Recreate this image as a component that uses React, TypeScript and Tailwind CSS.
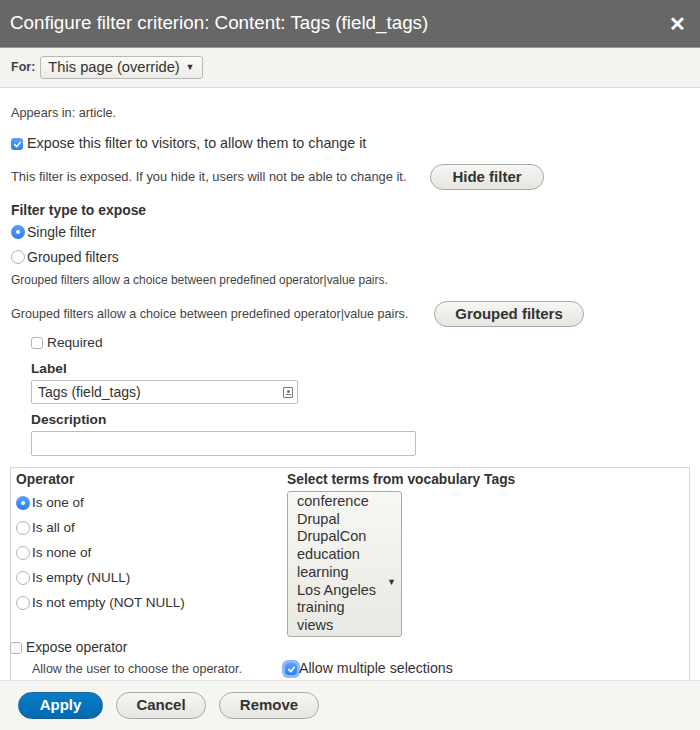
import React from "react";

function Check({ checked, glow }: { checked?: boolean; glow?: boolean }) {
  if (checked) {
    return (
      <span
        className={`inline-flex h-[12px] w-[12px] shrink-0 items-center justify-center rounded-[3px] bg-gradient-to-b from-[#5aa2fa] to-[#2a7ef0] ${glow ? "ring-[3px] ring-[#8fb8f4]" : ""}`}
      >
        <svg width="9" height="9" viewBox="0 0 10 10">
          <path d="M2 5.2 L4.2 7.4 L8 2.6" fill="none" stroke="white" strokeWidth="1.8" strokeLinecap="round" strokeLinejoin="round" />
        </svg>
      </span>
    );
  }
  return <span className="inline-block h-[12px] w-[12px] shrink-0 rounded-[3px] border border-[#b3b3b3] bg-white" />;
}

function Radio({ checked }: { checked?: boolean }) {
  if (checked) {
    return (
      <span className="inline-flex h-[14px] w-[14px] shrink-0 items-center justify-center rounded-full bg-gradient-to-b from-[#5aa2fa] to-[#2a7ef0]">
        <span className="h-[4px] w-[4px] rounded-full bg-white" />
      </span>
    );
  }
  return <span className="inline-block h-[14px] w-[14px] shrink-0 rounded-full border border-[#b3b3b3] bg-white" />;
}

function PillButton({ children, className }: { children: React.ReactNode; className?: string }) {
  return (
    <span
      className={`inline-flex items-center justify-center rounded-full border border-[#a8a8a8] bg-gradient-to-b from-[#f6f6f3] to-[#e6e5df] text-[15px] font-bold text-[#333] ${className ?? ""}`}
    >
      {children}
    </span>
  );
}

export default function App() {
  const ops = ["Is one of", "Is all of", "Is none of", "Is empty (NULL)", "Is not empty (NOT NULL)"];
  const terms = ["conference", "Drupal", "DrupalCon", "education", "learning", "Los Angeles", "training", "views"];
  return (
    <div className="relative h-[730px] w-[700px] overflow-hidden bg-white font-['Liberation_Sans',Arial,sans-serif] text-[#333]">
      {/* header */}
      <div className="flex h-[47px] items-center justify-between bg-[#676767] pl-[10px] pr-[14px]">
        <span className="text-[18.8px] text-white">Configure filter criterion: Content: Tags (field_tags)</span>
        <span className="text-[20px] font-bold text-white">✕</span>
      </div>
      <div className="h-px bg-[#9a9a9a]" />
      {/* for bar */}
      <div className="flex h-[40px] items-center gap-[5px] border-b border-[#dcdcd6] bg-[#f3f3ef] pl-[11px]">
        <span className="text-[12.5px] font-bold text-[#444]">For:</span>
        <span className="flex h-[23px] w-[163px] items-center justify-between rounded-[3px] border border-[#b9b9b4] bg-gradient-to-b from-[#fafaf8] to-[#ebebe6] pl-[7px] pr-[8px] text-[14.7px] text-[#333]">
          This page (override)
          <span className="text-[9px]">▼</span>
        </span>
      </div>

      {/* body */}
      <div className="flex flex-col px-[11px]">
        <div className="mt-[14px] flex h-[24px] items-center text-[12.7px] text-[#444]">Appears in: article.</div>
        <div className="mt-[6px] flex h-[24px] items-center gap-[4px] text-[14.3px]">
          <Check checked />
          Expose this filter to visitors, to allow them to change it
        </div>
        <div className="mt-[8px] flex h-[26px] items-center text-[12.9px] text-[#444]">
          <span className="w-[419px]">This filter is exposed. If you hide it, users will not be able to change it.</span>
          <PillButton className="h-[26px] w-[114px]">Hide filter</PillButton>
        </div>
        <div className="mt-[10px] flex h-[20px] items-center text-[13.9px] font-bold">Filter type to expose</div>
        <div className="mt-[2px] flex h-[20px] items-center gap-[2px] text-[14px]">
          <Radio checked />
          Single filter
        </div>
        <div className="mt-[5px] flex h-[20px] items-center gap-[2px] text-[14px]">
          <Radio />
          Grouped filters
        </div>
        <div className="mt-[5px] flex h-[18px] items-center text-[11.95px] text-[#444]">
          Grouped filters allow a choice between predefined operator|value pairs.
        </div>
        <div className="mt-[11px] flex h-[26px] items-center text-[12.6px] text-[#444]">
          <span className="w-[423px]">Grouped filters allow a choice between predefined operator|value pairs.</span>
          <PillButton className="h-[26px] w-[150px]">Grouped filters</PillButton>
        </div>
        <div className="ml-[20px] flex flex-col">
          <div className="mt-[7px] flex h-[18px] items-center gap-[4px] text-[13.7px]">
            <Check />
            Required
          </div>
          <div className="mt-[8px] flex h-[18px] items-center text-[13.7px] font-bold">Label</div>
          <div className="mt-[2px] flex h-[24px] w-[267px] items-center justify-between rounded-[2px] border border-[#bdbdbd] bg-white pl-[6px] pr-[4px] text-[14px] text-[#333]">
            Tags (field_tags)
            <span className="flex h-[11px] w-[10px] flex-col items-center justify-center rounded-[1px] border border-[#777]">
              <span className="h-[3px] w-[3px] rounded-full bg-[#777]" />
              <span className="mt-[1px] h-[1px] w-[5px] bg-[#777]" />
            </span>
          </div>
          <div className="mt-[7px] flex h-[18px] items-center text-[13.7px] font-bold">Description</div>
          <div className="mt-[2px] h-[25px] w-[385px] rounded-[2px] border border-[#bdbdbd] bg-white" />
        </div>
      </div>

      {/* fieldset */}
      <div className="mx-[10px] mt-[11px] h-[240px] border border-[#d6d6d6]">
        <div className="flex">
          <div className="flex w-[272px] flex-col pl-[5px]">
            <div className="mt-[3px] flex h-[18px] items-center text-[13.8px] font-bold">Operator</div>
            {ops.map((o, i) => (
              <div key={o} className={`${i === 0 ? "mt-[4px]" : "mt-[5px]"} flex h-[20px] items-center gap-[2px] text-[13.5px]`}>
                <Radio checked={i === 0} />
                {o}
              </div>
            ))}
          </div>
          <div className="flex flex-col pl-[4px]">
            <div className="mt-[3px] flex h-[18px] items-center text-[13.8px] font-bold">Select terms from vocabulary Tags</div>
            <div className="relative mt-[2px] h-[146px] w-[115px] rounded-[3px] border border-[#a9a9a9] bg-gradient-to-b from-[#f7f7f4] to-[#e9e9e3] pl-[9px] pt-[1px] text-[14.5px] leading-[17.7px] text-[#333]">
              {terms.map((t) => (
                <div key={t}>{t}</div>
              ))}
              <span className="absolute right-[5px] top-[82px] text-[9px]">▼</span>
            </div>
          </div>
        </div>
        <div className="-ml-[1px] mt-[2px] flex h-[18px] items-center gap-[4px] text-[13.8px]">
          <Check />
          Expose operator
        </div>
        <div className="mt-[3px] flex h-[18px] items-center text-[12.5px] text-[#444]">
          <span className="w-[274px] pl-[21px]">Allow the user to choose the operator.</span>
          <span className="flex items-center gap-[2px] text-[14.2px] text-[#333]">
            <Check checked glow />
            Allow multiple selections
          </span>
        </div>
      </div>

      {/* footer */}
      <div className="absolute bottom-0 left-0 right-0 flex h-[50px] items-center gap-[13px] border-t border-[#e3e3de] bg-[#f5f5f2] pl-[18px]">
        <span className="inline-flex h-[27px] w-[85px] items-center justify-center rounded-full border border-[#1e5b8f] bg-gradient-to-b from-[#0a7dc6] to-[#006bb0] text-[15px] font-bold text-white">
          Apply
        </span>
        <PillButton className="h-[27px] w-[90px]">Cancel</PillButton>
        <PillButton className="h-[27px] w-[100px]">Remove</PillButton>
      </div>
    </div>
  );
}
